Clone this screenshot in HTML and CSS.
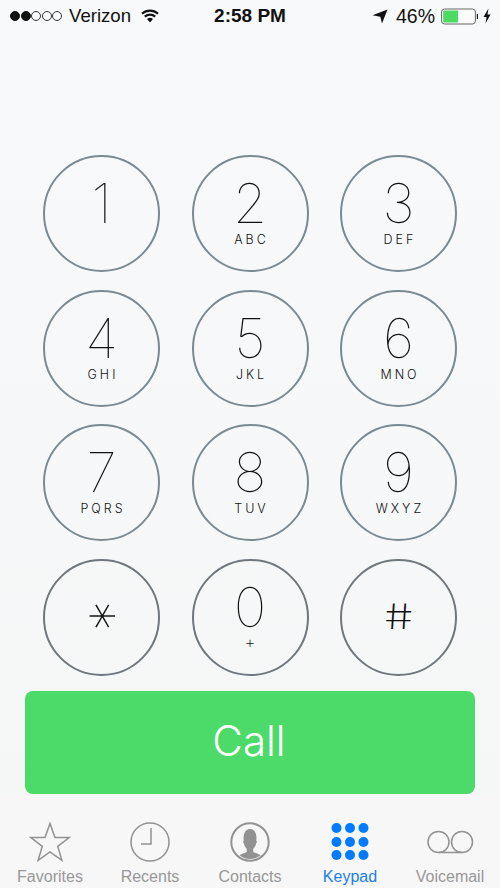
FILE: index.html
```html
<!DOCTYPE html>
<html lang="en">
<head>
<meta charset="utf-8">
<title>Keypad</title>
<link rel="stylesheet" href="styles.css">
</head>
<body>
<div class="phone">
  <header class="status">
    <div class="status-left">
      <span class="signal"><i class="dot on"></i><i class="dot on"></i><i class="dot"></i><i class="dot"></i><i class="dot"></i></span>
      <span class="carrier">Verizon</span>
      <svg class="wifi" width="20" height="15" viewBox="0 0 20 15"><path d="M10 14.500 7 11a4.600 4.600 0 0 1 6 0Z" fill="#111"/><path d="M4.800 8.600a7.800 7.800 0 0 1 10.400 0M2 5.600a12 12 0 0 1 16 0" fill="none" stroke="#111" stroke-width="2.200"/></svg>
    </div>
    <div class="clock">2:58 PM</div>
    <div class="status-right">
      <svg class="arrow" width="16" height="15" viewBox="0 0 16 15"><path d="M15.500.5 10 14.500 8.300 7.700 .5 6.300Z" fill="#111"/></svg>
      <span class="percent">46%</span>
      <svg class="battery" width="38" height="17" viewBox="0 0 38 17"><rect x=".6" y="1" width="33.800" height="15" rx="3" fill="#fafafa" stroke="#666" stroke-width="1"/><rect x="2.200" y="2.600" width="15" height="11.800" rx="1" fill="#4cd964"/><path d="M35.800 6h1.200v5h-1.200z" fill="#222"/></svg>
      <svg class="bolt" width="8" height="16" viewBox="0 0 8 16"><path d="M5.500.5.5 9h3L2.500 15.500 7.500 6.500h-3Z" fill="#111"/></svg>
    </div>
  </header>

  <main class="keypad">
    <button class="key"><span class="digit">1</span></button>
    <button class="key"><span class="digit">2</span><span class="letters">ABC</span></button>
    <button class="key"><span class="digit">3</span><span class="letters">DEF</span></button>
    <button class="key"><span class="digit">4</span><span class="letters">GHI</span></button>
    <button class="key"><span class="digit">5</span><span class="letters">JKL</span></button>
    <button class="key"><span class="digit">6</span><span class="letters">MNO</span></button>
    <button class="key"><span class="digit">7</span><span class="letters">PQRS</span></button>
    <button class="key"><span class="digit">8</span><span class="letters">TUV</span></button>
    <button class="key"><span class="digit">9</span><span class="letters">WXYZ</span></button>
    <button class="key key-dark"><span class="symbol star-key">*</span></button>
    <button class="key key-dark"><span class="digit">0</span><span class="letters plus">+</span></button>
    <button class="key key-dark"><span class="symbol hash-key">#</span></button>
  </main>

  <button class="call">Call</button>

  <nav class="tabs">
    <div class="tab">
      <svg class="tab-icon" width="44" height="42" viewBox="0 0 44 42"><path d="M22 2.500 27 16.500H41.200L29.700 25.300 33.900 39.300 22 30.900 10.100 39.300 14.300 25.300 2.800 16.500H17Z" fill="none" stroke="#929292" stroke-width="1.500"/></svg>
      <span>Favorites</span>
    </div>
    <div class="tab">
      <svg class="tab-icon" width="44" height="42" viewBox="0 0 44 42"><circle cx="22" cy="21" r="19" fill="none" stroke="#929292" stroke-width="1.500"/><path d="M23 7V23H13" fill="none" stroke="#929292" stroke-width="1.500"/></svg>
      <span>Recents</span>
    </div>
    <div class="tab">
      <svg class="tab-icon" width="44" height="42" viewBox="0 0 44 42"><defs><clipPath id="c"><circle cx="22" cy="21" r="17"/></clipPath></defs><circle cx="22" cy="21" r="18.700" fill="none" stroke="#929292" stroke-width="2"/><g clip-path="url(#c)" fill="#929292"><path d="M8 40c0-4 1-5.500 10-8.500 1-.8 1-2.500.5-4-1.500-1.500-2.300-3.300-2.600-5-.9-.5-1-2.500-.2-3C15 13 17 8 22 8s7 5 6.300 11.500c.8.500.7 2.500-.2 3-.3 1.700-1.100 3.500-2.600 5-.5 1.500-.5 3.200.5 4 9 3 10 4.500 10 8.500Z"/></g></svg>
      <span>Contacts</span>
    </div>
    <div class="tab active">
      <svg class="tab-icon" width="44" height="42" viewBox="0 0 44 42"><g fill="#007aff"><circle cx="8.500" cy="7" r="5"/><circle cx="22" cy="7" r="5"/><circle cx="35.500" cy="7" r="5"/><circle cx="8.500" cy="21" r="5"/><circle cx="22" cy="21" r="5"/><circle cx="35.500" cy="21" r="5"/><circle cx="8.500" cy="34" r="5"/><circle cx="22" cy="34" r="5"/><circle cx="35.500" cy="34" r="5"/></g></svg>
      <span>Keypad</span>
    </div>
    <div class="tab">
      <svg class="tab-icon" width="50" height="42" viewBox="0 0 50 42"><g fill="none" stroke="#929292" stroke-width="1.500"><circle cx="13.500" cy="21" r="10.500"/><circle cx="37" cy="21" r="10.500"/><path d="M13.500 31.500H37"/></g></svg>
      <span>Voicemail</span>
    </div>
  </nav>
</div>
</body>
</html>
```
FILE: styles.css
```css
* { box-sizing: border-box; }
html, body { margin: 0; padding: 0; }
body {
  width: 500px;
  height: 888px;
  overflow: hidden;
  font-family: "Liberation Sans", Arial, sans-serif;
}
.phone {
  width: 500px;
  height: 888px;
  display: flex;
  flex-direction: column;
  background: linear-gradient(#f8f9fa, #f5f7f7);
}
.status {
  height: 32px;
  display: grid;
  grid-template-columns: 1fr auto 1fr;
  align-items: center;
  color: #111;
  font-size: 18.600px;
}
.status-left { display: flex; align-items: center; padding-left: 10px; }
.signal { display: flex; gap: 0.500px; }
.dot {
  width: 10px;
  height: 10px;
  border-radius: 50%;
  border: 1px solid #333;
}
.dot.on { background: #111; border-color: #111; }
.carrier { margin-left: 7px; }
.wifi { margin-left: 9px; margin-top: -2px; }
.clock { font-weight: 700; font-size: 19px; }
.status-right { display: flex; align-items: center; justify-content: flex-end; padding-right: 9px; }
.percent { margin-left: 8px; font-size: 19.500px; }
.battery { margin-left: 6px; }
.bolt { margin-left: 4px; }

.keypad {
  margin-top: 123px;
  display: grid;
  grid-template-columns: repeat(3, 117px);
  grid-auto-rows: 117px;
  column-gap: 31.500px;
  row-gap: 17.500px;
  justify-content: center;
}
.key {
  width: 117px;
  height: 117px;
  padding: 21px 0 0;
  border: 2.700px solid #7a8a93;
  border-radius: 50%;
  background: transparent;
  color: #111;
  display: flex;
  flex-direction: column;
  align-items: center;
  font-family: Inter, Roboto, sans-serif;
}
.key-dark { border-color: #6f777c; }
.digit {
  font-size: 55px;
  font-weight: 100;
  line-height: 50px;
  height: 50px;
}
.letters {
  margin-top: 4px;
  font-family: Inter, Roboto, sans-serif;
  font-weight: 300;
  font-size: 12.500px;
  line-height: 15px;
  letter-spacing: 3px;
  margin-right: -3px;
  color: #111;
}
.plus { margin-top: 3px; font-size: 17px; font-weight: 200; letter-spacing: 0; margin-right: 0; }
.symbol {
  margin-top: 14px;
  font-weight: 200;
  line-height: 44px;
  font-family: Inter, Roboto, sans-serif;
}
.star-key {
  font-size: 62px;
  font-weight: 100;
  transform: translate(-10px, -2px) rotate(90deg);
}
.hash-key {
  font-size: 40px;
  font-weight: 200;
  transform: translateY(-1px) skewX(8deg) scale(1.12, 0.88);
}
.call {
  margin: 15.500px 25px 0;
  height: 103px;
  flex: none;
  border: 0;
  border-radius: 8px;
  background: #4cdb68;
  color: #fff;
  font-family: Inter, "Liberation Sans", sans-serif;
  font-weight: 300;
  font-size: 42px;
  padding: 0 2px 4px 0;
}
.tabs {
  flex: 1;
  display: grid;
  grid-template-columns: repeat(5, 100px);
  padding-top: 27px;
  background: #f7f7f7;
}
.tab {
  display: flex;
  flex-direction: column;
  align-items: center;
  color: #979797;
  font-size: 16px;
}
.tab span { margin-top: 5px; line-height: 18px; }
.tab-icon { display: block; }
.tab.active { color: #1a7fe8; }
```
